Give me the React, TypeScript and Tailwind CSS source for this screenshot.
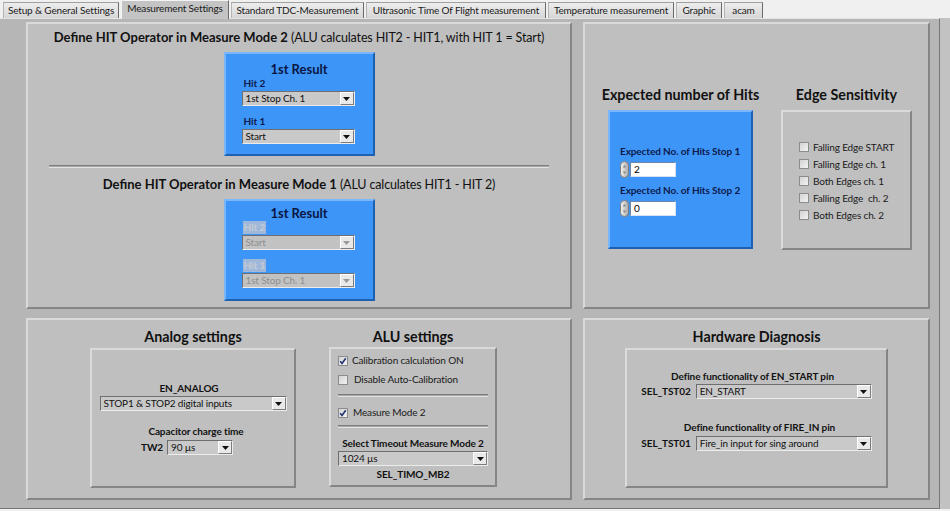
import React from "react";

const small = "text-[10px] leading-[13px] tracking-[-0.15px]";
const smallBold = "text-[10px] leading-[13px] font-bold tracking-[-0.1px]";
const sectionTitle = "text-[14.3px] leading-[17px] font-bold text-[#111111] whitespace-nowrap";

const tabs = [
  { label: "Setup & General Settings", w: "w-[116px]" },
  { label: "Measurement Settings", w: "w-[108px]", active: true },
  { label: "Standard TDC-Measurement", w: "w-[133px]" },
  { label: "Ultrasonic Time Of Flight measurement", w: "w-[180px]" },
  { label: "Temperature measurement", w: "w-[126px]" },
  { label: "Graphic", w: "w-[46px]" },
  { label: "acam", w: "w-[39px]" },
];

function Panel({ children, className = "" }: { children?: React.ReactNode; className?: string }) {
  return (
    <div
      className={
        "bg-[#bfbfbf] border-2 border-t-[#dadada] border-l-[#dadada] border-r-[#858585] border-b-[#858585] " +
        className
      }
    >
      {children}
    </div>
  );
}

function BlueBox({ children, className = "" }: { children?: React.ReactNode; className?: string }) {
  return (
    <div
      className={
        "bg-[#3d95f7] border-2 border-t-[#7ab6fb] border-l-[#7ab6fb] border-r-[#2060b0] border-b-[#2060b0] " +
        className
      }
    >
      {children}
    </div>
  );
}

function Arrow({ disabled }: { disabled?: boolean }) {
  return (
    <div className="w-[14px] shrink-0 bg-[#e9e9e9] border border-t-[#ffffff] border-l-[#ffffff] border-r-[#7c7c7c] border-b-[#7c7c7c] flex items-center justify-center">
      <svg viewBox="0 0 7 4" className="w-[7px] h-[4px]">
        <path d="M0 0 H7 L3.5 4 Z" fill={disabled ? "#9a9a9a" : "#111111"} />
      </svg>
    </div>
  );
}

function Ring({ value, w, disabled }: { value: string; w: string; disabled?: boolean }) {
  return (
    <div
      className={
        "flex h-[15px] border border-t-[#6f6f6f] border-l-[#6f6f6f] border-r-[#ececec] border-b-[#ececec] " +
        (disabled ? "bg-[#c2c2c2] text-[#8f8f8f] " : "bg-[#c9c9c9] text-[#111111] ") +
        w
      }
    >
      <div className={"flex-1 pl-[3px] whitespace-nowrap overflow-hidden " + small}>{value}</div>
      <Arrow disabled={disabled} />
    </div>
  );
}

function Check({ checked }: { checked?: boolean }) {
  return (
    <span className="w-[10px] h-[10px] shrink-0 border border-[#8c8c8c] bg-linear-to-br from-[#d4d4d4] to-[#f2f2f2] flex items-center justify-center">
      {checked && (
        <svg viewBox="0 0 8 8" className="w-[8px] h-[8px]">
          <path d="M1.2 4.2 L3 6.4 L6.8 1.2" fill="none" stroke="#1d2f70" strokeWidth="1.5" />
        </svg>
      )}
    </span>
  );
}

function CheckRow({ label, checked, textGap = "gap-[4px]" }: { label: string; checked?: boolean; textGap?: string }) {
  return (
    <div className={"flex items-center h-[13px] " + textGap}>
      <Check checked={checked} />
      <span className={"whitespace-pre text-[#1a1a1a] " + small}>{label}</span>
    </div>
  );
}

function Separator({ className = "" }: { className?: string }) {
  return <div className={"h-[3px] border-t border-[#7d7d7d] bg-[#a8a8a8] border-b border-b-[#e2e2e2] " + className} />;
}

function Spinner() {
  return (
    <svg viewBox="0 0 9 17" className="w-[9px] h-[17px] shrink-0">
      <defs>
        <linearGradient id="sp" x1="0" x2="1" y1="0" y2="0">
          <stop offset="0" stopColor="#f4f4f4" />
          <stop offset="1" stopColor="#a9a9a9" />
        </linearGradient>
      </defs>
      <rect x="0.5" y="0.5" width="8" height="16" rx="4" fill="url(#sp)" stroke="#7d7d7d" />
      <path d="M2.8 6.5 L4.5 4 L6.2 6.5 Z" fill="#8a8a8a" />
      <path d="M2.8 10.5 L4.5 13 L6.2 10.5 Z" fill="#8a8a8a" />
    </svg>
  );
}

function Numeric({ value }: { value: string }) {
  return (
    <div className="flex items-center h-[17px]">
      <Spinner />
      <div className={"ml-[1px] w-[46px] h-[15px] bg-white border border-t-[#6d86a8] border-l-[#6d86a8] border-r-[#d5e3f4] border-b-[#d5e3f4] pl-[3px] text-black " + small}>
        {value}
      </div>
    </div>
  );
}

function HitBox({ hit2, hit1, disabled, className = "" }: { hit2: string; hit1: string; disabled?: boolean; className?: string }) {
  const labelCls =
    "self-start px-[1px] " +
    smallBold +
    (disabled ? " bg-[#9fb8da] text-[#c6cbd3]" : " text-[#0c1a4d]");
  return (
    <BlueBox className={"w-[151px] flex flex-col pl-[17px] " + className}>
      <div className="text-[13px] leading-[16px] font-bold text-[#0a1542] text-center pr-[17px]">1st Result</div>
      <div className={labelCls}>Hit 2</div>
      <Ring value={hit2} w="w-[113px] -ml-[1px] mt-[1px]" disabled={disabled} />
      <div className={labelCls + " mt-[9px]"}>Hit 1</div>
      <Ring value={hit1} w="w-[113px] -ml-[1px] mt-[1px]" disabled={disabled} />
    </BlueBox>
  );
}

export default function App() {
  return (
    <div className="w-[950px] h-[511px] bg-[#f0f0f0] flex flex-col overflow-hidden font-['Lato','Liberation_Sans',sans-serif] text-black">
      {/* tab strip */}
      <div className="h-[18px] flex items-end pl-[3px] gap-[2px] shrink-0">
        {tabs.map((t) =>
          t.active ? (
            <div
              key={t.label}
              className={
                "h-[19px] -mb-[1px] z-10 bg-[#c4c4c4] border border-b-0 border-t-[#f4f4f4] border-l-[#f4f4f4] border-r-[#6a6a6a] flex items-start justify-center pt-[1px] text-[#1a1a1a] whitespace-nowrap " +
                small +
                " " +
                t.w
              }
            >
              {t.label}
            </div>
          ) : (
            <div
              key={t.label}
              className={
                "h-[16px] bg-linear-to-b from-[#ededed] to-[#d6d6d6] border border-b-0 border-t-[#a0a0a0] border-l-[#b4b4b4] border-r-[#6a6a6a] flex items-center justify-center text-[#1a1a1a] whitespace-nowrap " +
                small +
                " " +
                t.w
              }
            >
              {t.label}
            </div>
          )
        )}
      </div>

      {/* content */}
      <div className="h-[491px] flex shrink-0">
        <div className="w-[940px] bg-[#b6b6b6] border-t border-t-[#e4e4e4] border-r border-r-[#767676] border-b border-b-[#767676] pt-[3px] pl-[26px]">
          <div className="grid grid-cols-[546px_347px] grid-rows-[287px_182px] gap-x-[11px] gap-y-[9px]">
            {/* Top left */}
            <Panel className="flex flex-col items-center">
              <div className="mt-[5px] h-[16px] text-[13px] leading-[16px] whitespace-nowrap text-[#111111]">
                <span className="font-bold">Define HIT Operator in Measure Mode 2</span>
                <span className="text-[12.5px] tracking-[-0.15px]"> (ALU calculates HIT2 - HIT1, with HIT 1 = Start)</span>
              </div>
              <HitBox hit2="1st Stop Ch. 1" hit1="Start" className="mt-[7px] h-[104px] pt-[7px]" />
              <Separator className="mt-[9px] self-stretch mx-[21px]" />
              <div className="mt-[8px] h-[16px] text-[13px] leading-[16px] whitespace-nowrap text-[#111111]">
                <span className="font-bold">Define HIT Operator in Measure Mode 1</span>
                <span className="text-[12.5px] tracking-[-0.15px]"> (ALU calculates HIT1 - HIT 2)</span>
              </div>
              <HitBox hit2="Start" hit1="1st Stop Ch. 1" disabled className="mt-[7px] h-[102px] pt-[4px]" />
            </Panel>

            {/* Top right */}
            <Panel className="flex items-center pl-[23px] pt-[4px] gap-[28px]">
              <div className="w-[145px] flex flex-col items-center">
                <div className={sectionTitle}>Expected number of Hits</div>
                <BlueBox className="mt-[7px] w-[145px] h-[139px] flex flex-col justify-center pl-[10px] pt-[3px]">
                  <div className={"text-[#0c1a4d] whitespace-nowrap " + smallBold}>Expected No. of Hits Stop 1</div>
                  <div className="mt-[3px]">
                    <Numeric value="2" />
                  </div>
                  <div className={"mt-[6px] text-[#0c1a4d] whitespace-nowrap " + smallBold}>Expected No. of Hits Stop 2</div>
                  <div className="mt-[3px]">
                    <Numeric value="0" />
                  </div>
                </BlueBox>
              </div>
              <div className="w-[131px] flex flex-col items-center">
                <div className={sectionTitle}>Edge Sensitivity</div>
                <Panel className="mt-[7px] w-[131px] h-[140px] flex flex-col justify-center gap-[4px] pl-[16px] pt-[3px]">
                  <CheckRow label="Falling Edge START" />
                  <CheckRow label="Falling Edge ch. 1" />
                  <CheckRow label="Both Edges ch. 1" />
                  <CheckRow label="Falling Edge  ch. 2" />
                  <CheckRow label="Both Edges ch. 2" />
                </Panel>
              </div>
            </Panel>

            {/* Bottom left */}
            <Panel className="flex pl-[62px] gap-[33px]">
              <div className="w-[206px] flex flex-col items-center">
                <div className={"mt-[8px] " + sectionTitle}>Analog settings</div>
                <Panel className="mt-[3px] w-[206px] h-[140px] flex flex-col items-center pt-[32px]">
                  <div className={"text-[#111111] pr-[8px] " + smallBold}>EN_ANALOG</div>
                  <Ring value="STOP1 & STOP2 digital inputs" w="w-[187px] mt-[1px]" />
                  <div className={"mt-[14px] text-[#111111] pl-[6px] " + smallBold}>Capacitor charge time</div>
                  <div className="mt-[2px] flex items-center gap-[4px] pr-[12px]">
                    <span className={"text-[#111111] " + smallBold}>TW2</span>
                    <Ring value="90 µs" w="w-[66px]" />
                  </div>
                </Panel>
              </div>
              <div className="w-[168px] flex flex-col items-center">
                <div className={"mt-[8px] " + sectionTitle}>ALU settings</div>
                <Panel className="mt-[2px] w-[168px] h-[140px] flex flex-col px-[7px] pt-[5px]">
                  <CheckRow label="Calibration calculation ON" checked />
                  <div className="mt-[6px]">
                    <CheckRow label="Disable Auto-Calibration" textGap="gap-[6px]" />
                  </div>
                  <Separator className="mt-[8px]" />
                  <div className="mt-[9px]">
                    <CheckRow label="Measure Mode 2" checked textGap="gap-[5px]" />
                  </div>
                  <Separator className="mt-[6px]" />
                  <div className={"mt-[9px] text-[#111111] text-center whitespace-nowrap " + smallBold}>
                    Select Timeout Measure Mode 2
                  </div>
                  <Ring value="1024 µs" w="w-full mt-[1px]" />
                  <div className={"mt-[2px] text-[#111111] text-center " + smallBold}>SEL_TIMO_MB2</div>
                </Panel>
              </div>
            </Panel>

            {/* Bottom right */}
            <Panel className="flex flex-col items-center">
              <div className={"mt-[8px] " + sectionTitle}>Hardware Diagnosis</div>
              <Panel className="mt-[3px] w-[263px] h-[140px] flex flex-col items-center pt-[20px]">
                <div className={"text-[#111111] pr-[8px] " + smallBold}>Define functionality of EN_START pin</div>
                <div className="mt-[1px] flex items-center gap-[5px]">
                  <span className={"text-[#111111] " + smallBold}>SEL_TST02</span>
                  <Ring value="EN_START" w="w-[176px]" />
                </div>
                <div className={"mt-[22px] text-[#111111] pl-[6px] " + smallBold}>Define functionality of FIRE_IN pin</div>
                <div className="mt-[2px] flex items-center gap-[5px]">
                  <span className={"text-[#111111] " + smallBold}>SEL_TST01</span>
                  <Ring value="Fire_in input for sing around" w="w-[176px]" />
                </div>
              </Panel>
            </Panel>
          </div>
        </div>
        <div className="flex-1 bg-[#c2c2c2]" />
      </div>
    </div>
  );
}
